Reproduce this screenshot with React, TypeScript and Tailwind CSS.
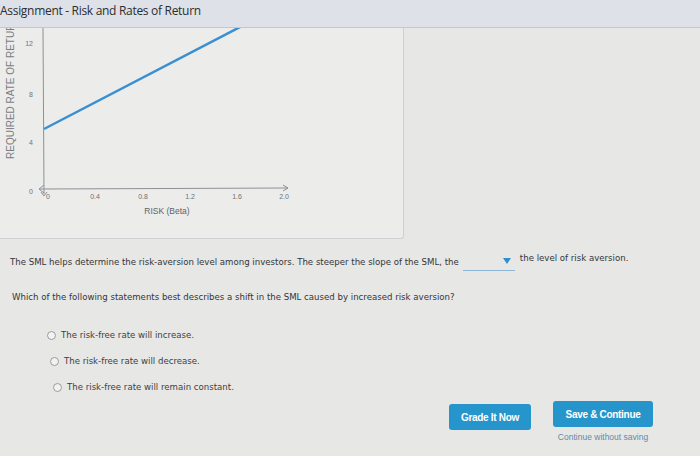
import React from 'react'

const xTicks = [
  { x: 48, label: '0' },
  { x: 95, label: '0.4' },
  { x: 143, label: '0.8' },
  { x: 190, label: '1.2' },
  { x: 237, label: '1.6' },
  { x: 284, label: '2.0' },
]

const yTicks = [
  { y: 15, label: '12' },
  { y: 66, label: '8' },
  { y: 114, label: '4' },
  { y: 163, label: '0' },
]

function SmlChart() {
  return (
    <svg width="403" height="210" viewBox="0 0 403 210" className="block">
      <defs>
        <clipPath id="plot">
          <rect x="0" y="0" width="403" height="210" />
        </clipPath>
      </defs>
      {/* y axis label, cut at the top */}
      <text
        x="0"
        y="0"
        transform="translate(14 131) rotate(-90)"
        fontSize="10"
        fill="#7b7e82"
        fontFamily="'Liberation Sans', sans-serif"
      >
        REQUIRED RATE OF RETURN (%)
      </text>
      {yTicks.map(t => (
        <text key={t.label} x="33" y={t.y + 3} fontSize="7" fill="#6f7276" textAnchor="end" fontFamily="'Liberation Sans', sans-serif">
          {t.label}
        </text>
      ))}
      {/* axes */}
      <line x1="43" y1="0" x2="44" y2="166" stroke="#8d9096" strokeWidth="1" />
      <line x1="40" y1="161" x2="288" y2="160" stroke="#8d9096" strokeWidth="1" />
      <path d="M283 157 L288 160 L283 163" fill="none" stroke="#8d9096" strokeWidth="1" />
      <path d="M44 157 L39 161 L44 165" fill="none" stroke="#8d9096" strokeWidth="1" />
      <path d="M41 164 L44 168 L47 164" fill="none" stroke="#8d9096" strokeWidth="1" />
      {xTicks.map(t => (
        <text key={t.label} x={t.x} y="171" fontSize="7" fill="#6f7276" textAnchor="middle" fontFamily="'Liberation Sans', sans-serif">
          {t.label}
        </text>
      ))}
      <text x="167" y="186" fontSize="8.5" fill="#5f6266" textAnchor="middle" fontFamily="'Liberation Sans', sans-serif">
        RISK (Beta)
      </text>
      {/* security market line */}
      <g clipPath="url(#plot)">
        <line x1="44" y1="101" x2="242" y2="-2" stroke="#3a8fd1" strokeWidth="2.5" />
      </g>
    </svg>
  )
}

function Radio({ label, indent }: { label: string; indent: string }) {
  return (
    <label className={`flex items-center gap-[5px] ${indent}`}>
      <span className="w-[9px] h-[9px] rounded-full border border-[#9a9c9e] bg-[#f2f2f0]" />
      <span className="text-[8.6px] text-[#3d3f42]">{label}</span>
    </label>
  )
}

export default function App() {
  return (
    <div
      className="w-[700px] h-[456px] overflow-hidden bg-[#e7e7e5] flex flex-col"
      style={{ fontFamily: "'DejaVu Sans', Verdana, sans-serif" }}
    >
      {/* title bar */}
      <div className="h-[28px] shrink-0 bg-[#dee1e7] border-b border-[#c3c7ce] flex items-center relative z-10">
        <h1 className="text-[12px] leading-none text-[#2b2d31] tracking-[-0.3px] -mt-[5px]" style={{ fontFamily: "'Open Sans', sans-serif" }}>
          Assignment - Risk and Rates of Return
        </h1>
      </div>

      {/* chart card */}
      <div className="w-[404px] h-[211px] shrink-0 border-r border-b border-[#cdd0d3] bg-[#ececea] rounded-br-[3px]">
        <SmlChart />
      </div>

      {/* question 1 */}
      <div className="mt-[13px] pl-[10px] flex items-end text-[8.6px] text-[#34363a]">
        <span className="mb-[2px]">
          The SML helps determine the risk-aversion level among investors. The steeper the slope of the SML, the
        </span>
        <span className="ml-[4px] w-[52px] h-[14px] border-b border-[#8fb6d6] relative">
          <svg width="8" height="6" viewBox="0 0 8 6" className="absolute right-[4px] top-[1px]">
            <path d="M0 0 L8 0 L4 6 Z" fill="#2e8fd0" />
          </svg>
        </span>
        <span className="ml-[5px] mb-[6px]">the level of risk aversion.</span>
      </div>

      {/* question 2 */}
      <div className="mt-[20px] pl-[12px] text-[8.6px] text-[#34363a]">
        Which of the following statements best describes a shift in the SML caused by increased risk aversion?
      </div>

      <div className="mt-[25px] flex flex-col gap-[13px]">
        <Radio label="The risk-free rate will increase." indent="pl-[47px]" />
        <Radio label="The risk-free rate will decrease." indent="pl-[50px]" />
        <Radio label="The risk-free rate will remain constant." indent="pl-[53px]" />
      </div>

      {/* actions */}
      <div className="mt-[8px] flex justify-end pr-[47px] gap-[22px]" style={{ fontFamily: "'Liberation Sans', Arial, sans-serif" }}>
        <button className="mt-[3px] w-[82px] h-[26px] rounded-[3px] bg-[#2595cb] text-white text-[10px] font-bold tracking-[-0.3px]">
          Grade It Now
        </button>
        <div className="flex flex-col items-center">
          <button className="w-[100px] h-[26px] rounded-[3px] bg-[#2595cb] text-white text-[10px] font-bold tracking-[-0.3px]">
            Save &amp; Continue
          </button>
          <span className="mt-[4px] text-[8.5px] text-[#6688aa]">Continue without saving</span>
        </div>
      </div>
    </div>
  )
}
